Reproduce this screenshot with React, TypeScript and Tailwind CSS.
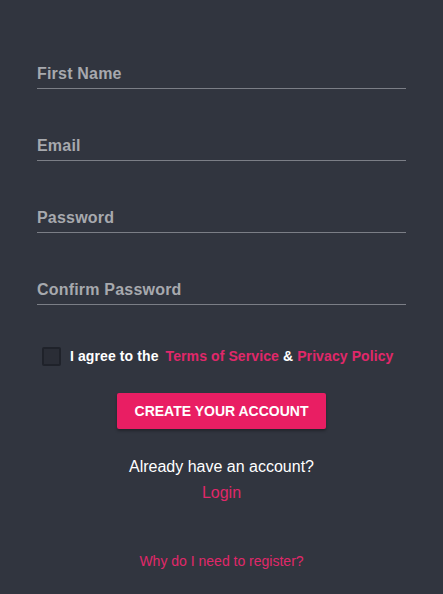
export default function App() {
  const fields = ['First Name', 'Email', 'Password', 'Confirm Password']
  return (
    <div className="min-h-[594px] w-full bg-[#31353f] font-['Liberation_Sans',Arial,sans-serif]">
      <div className="flex flex-col px-[37px] pt-[62px]">
        {fields.map((f) => (
          <div key={f} className="mb-[45px] border-b border-[#7b7e86] pb-[2px]">
            <span className="block text-[16px] font-bold leading-[24px] tracking-[0.2px] text-[#a7a9ae]">{f}</span>
          </div>
        ))}
      </div>
      <div className="mt-[-4px] flex items-center pl-[42px]">
        <span className="h-[19px] w-[19px] rounded-[2px] border-2 border-[#1f222a] bg-[#2a2d36]" />
        <span className="ml-[9px] text-[14px] font-bold tracking-[0.1px] text-white">
          I agree to the <span className="ml-[3px] text-[#e0286a]">Terms of Service</span> &amp;{' '}
          <span className="text-[#e0286a]">Privacy Policy</span>
        </span>
      </div>
      <div className="mt-[26px] flex justify-center">
        <button className="h-[36px] w-[209px] rounded-[2px] bg-[#e91e63] text-[14px] font-bold text-white shadow-[0_2px_3px_rgba(0,0,0,0.3)]">
          CREATE YOUR ACCOUNT
        </button>
      </div>
      <div className="mt-[25px] flex flex-col items-center text-[16px] leading-[26px]">
        <span className="text-white">Already have an account?</span>
        <span className="text-[#e0286a]">Login</span>
      </div>
      <div className="mt-[45px] flex justify-center text-[14px] text-[#e0286a]">Why do I need to register?</div>
    </div>
  )
}
